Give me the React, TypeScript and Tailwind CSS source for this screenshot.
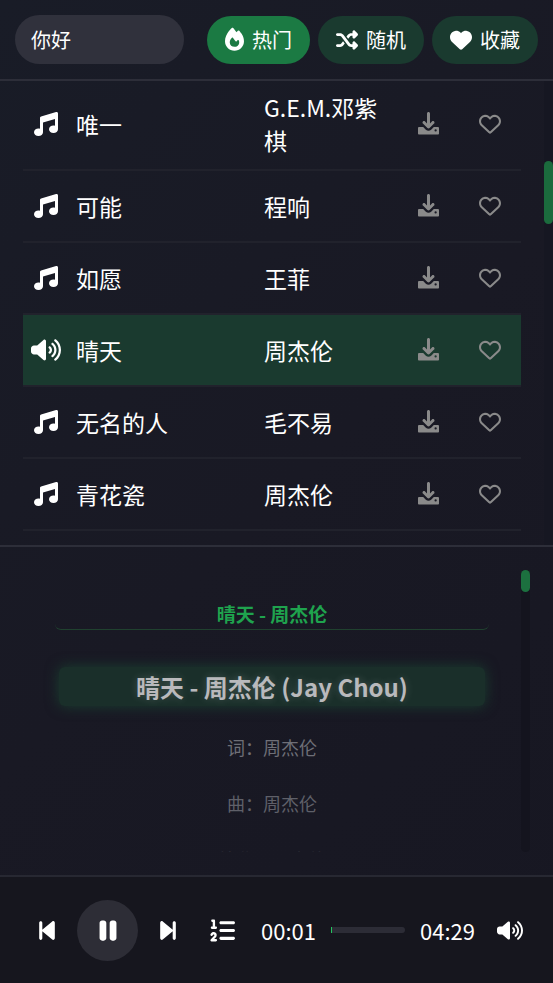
import { useState } from "react";
import {
  FaBackwardStep,
  FaForwardStep,
  FaHeart,
  FaListOl,
  FaMusic,
  FaPause,
  FaPlay,
  FaRegHeart,
  FaShuffle,
  FaVolumeHigh,
} from "react-icons/fa6";

function FireIcon() {
  return (
    <svg viewBox="0 0 448 512" fill="currentColor" className="h-[22px] w-[19px] overflow-visible" aria-hidden="true">
      <path d="M160.500-26.400c9.300-7.800 23-7.500 31.900 .900 12.300 11.600 23.300 24.400 33.900 37.400 13.500 16.500 29.700 38.300 45.300 64.200 5.200-6.800 10-12.800 14.200-17.900 1.100-1.300 2.200-2.700 3.300-4.100 7.900-9.800 17.700-22.100 30.800-22.100 13.400 0 22.800 11.900 30.800 22.100 1.300 1.700 2.600 3.300 3.900 4.800 10.300 12.400 24 30.300 37.700 52.400 27.200 43.900 55.600 106.400 55.600 176.600 0 123.700-100.300 224-224 224s-224-100.300-224-224c0-91.100 41.100-170 80.500-225 19.900-27.700 39.700-49.900 54.600-65.100 8.200-8.400 16.500-16.700 25.500-24.200zM225.700 416c25.300 0 47.700-7 68.800-21 42.100-29.400 53.400-88.200 28.100-134.400-4.500-9-16-9.600-22.500-2l-25.200 29.300c-6.600 7.600-18.500 7.400-24.700-.500-17.300-22.100-49.100-62.400-65.300-83-5.400-6.900-15.200-8-21.500-1.900-18.300 17.800-51.500 56.800-51.500 104.300 0 68.600 50.600 109.200 113.700 109.200z" />
    </svg>
  );
}

function DownloadIcon() {
  return (
    <svg viewBox="0 0 448 512" fill="currentColor" className="h-6 w-[21px]" aria-hidden="true">
      <path d="M256 32c0-17.700-14.300-32-32-32s-32 14.300-32 32v210.700l-41.400-41.400c-12.500-12.500-32.800-12.500-45.300 0s-12.500 32.800 0 45.300l96 96c12.500 12.500 32.800 12.500 45.300 0l96-96c12.500-12.500 12.500-32.800 0-45.300s-32.800-12.500-45.300 0L256 242.700V32z" />
      <path
        fillRule="evenodd"
        d="M24 320c-13.300 0-24 10.700-24 24v112c0 13.300 10.700 24 24 24h400c13.300 0 24-10.700 24-24V344c0-13.300-10.700-24-24-24h-86.900l-56.600 56.600c-31.200 31.200-81.900 31.200-113.100 0L110.900 320H24zm352 48a24 24 0 1 1 0 48 24 24 0 1 1 0-48z"
      />
    </svg>
  );
}

const songs = [
  { id: 1, name: "唯一", artist: "G.E.M.邓紫棋" },
  { id: 2, name: "可能", artist: "程响" },
  { id: 3, name: "如愿", artist: "王菲" },
  { id: 4, name: "晴天", artist: "周杰伦" },
  { id: 5, name: "无名的人", artist: "毛不易" },
  { id: 6, name: "青花瓷", artist: "周杰伦" },
];

const tabs = [
  { id: "hot", label: "热门", icon: <FireIcon /> },
  { id: "random", label: "随机", icon: <FaShuffle className="size-[22px]" /> },
  { id: "fav", label: "收藏", icon: <FaHeart className="size-[22px]" /> },
];

const lyrics = [
  { text: "词：周杰伦", tone: "text-[#6e6f77]" },
  { text: "曲：周杰伦", tone: "text-[#5f6069]" },
  { text: "编曲：周杰伦", tone: "text-[#2c2d36]" },
];

export default function App() {
  const [keyword, setKeyword] = useState("你好");
  const [tab, setTab] = useState("hot");
  const [current, setCurrent] = useState(4);
  const [playing, setPlaying] = useState(true);
  const [liked, setLiked] = useState<number[]>([]);
  const progress = 1 / 269;

  const toggleLike = (id: number) =>
    setLiked((prev) => (prev.includes(id) ? prev.filter((x) => x !== id) : [...prev, id]));

  return (
    <div className="flex h-screen flex-col overflow-hidden bg-linear-135 from-[#191c27] via-[#191924] to-[#171722] font-['Noto_Sans_CJK_SC',sans-serif] text-white">
      {/* Search and tabs */}
      <header className="flex shrink-0 items-center justify-between gap-5 border-b-2 border-[#2d2e39] p-[15px]">
        <input
          type="text"
          aria-label="搜索"
          className="h-[49px] w-[169px] min-w-0 rounded-full bg-[#30313c] px-4 text-xl text-white outline-none"
          value={keyword}
          onChange={(e) => setKeyword(e.target.value)}
        />
        <nav className="flex shrink-0 gap-2">
          {tabs.map((t) => (
            <button
              key={t.id}
              type="button"
              onClick={() => setTab(t.id)}
              className={[
                "flex h-12 items-center gap-2 rounded-full px-[18px] text-xl",
                tab === t.id ? "bg-[#1b7a43]" : "bg-[#1a3a2f]",
              ].join(" ")}
            >
              {t.icon}
              {t.label}
            </button>
          ))}
        </nav>
      </header>

      {/* Song list */}
      <main className="flex min-h-0 flex-1">
        <div className="min-w-0 flex-1 overflow-hidden px-[23px]">
          <table className="-mt-0.5 w-full table-fixed text-left text-[23px] leading-[33px]">
            <colgroup>
              <col className="w-[45px]" />
              <col />
              <col className="w-[141px]" />
              <col className="w-[62px]" />
              <col className="w-[62px]" />
            </colgroup>
            <tbody>
              {songs.map((song) => (
                <tr
                  key={song.id}
                  onClick={() => setCurrent(song.id)}
                  className={[
                    "h-[72px] border-b-2 border-[#21222c]",
                    song.id === current ? "bg-[#1a3a2f]" : "",
                  ].join(" ")}
                >
                  <td className="py-3">
                    <div className="flex justify-center">
                      {song.id === current ? (
                        <FaVolumeHigh className="h-6 w-[30px] shrink-0" />
                      ) : (
                        <FaMusic className="size-6" />
                      )}
                    </div>
                  </td>
                  <td className="px-2 py-3">{song.name}</td>
                  <td className="px-2 py-3">{song.artist}</td>
                  <td className="text-[#8a8a8a]">
                    <button type="button" aria-label="下载" className="flex w-full justify-center">
                      <DownloadIcon />
                    </button>
                  </td>
                  <td className="text-[#8a8a8a]">
                    <button
                      type="button"
                      aria-label="收藏"
                      onClick={() => toggleLike(song.id)}
                      className="flex w-full justify-center"
                    >
                      {liked.includes(song.id) ? (
                        <FaHeart className="size-[22px]" />
                      ) : (
                        <FaRegHeart className="size-[22px]" />
                      )}
                    </button>
                  </td>
                </tr>
              ))}
            </tbody>
          </table>
        </div>
        <div className="w-[9px] shrink-0 bg-[#161722] pt-20">
          <div className="h-[63px] rounded-full bg-[#1b6b3d]" />
        </div>
      </main>

      {/* Lyrics */}
      <section className="flex h-[330px] shrink-0 border-t-2 border-[#2d2e39] p-[23px]">
        <div className="min-w-0 flex-1 overflow-hidden text-center">
          <h2 className="mx-8 mt-7 rounded-b-md border-b border-[#20412f] text-[19px] leading-[31px] font-bold text-[#1fa34e]">
            晴天 - 周杰伦
          </h2>
          <p className="mx-9 mt-[37px] rounded-md bg-[#1a2f2a] text-2xl leading-[39px] font-bold text-[#b9b9bc] shadow-[0_0_14px_#1a3f30] text-shadow-[0_0_8px_#ffffff33]">
            晴天 - 周杰伦 (Jay Chou)
          </p>
          <div className="mt-[13px] text-lg leading-14">
            {lyrics.map((line) => (
              <p key={line.text} className={line.tone}>
                {line.text}
              </p>
            ))}
          </div>
        </div>
        <div className="w-[9px] shrink-0 rounded-full bg-[#14141e]">
          <div className="h-[22px] rounded-full bg-[#1c703f]" />
        </div>
      </section>

      {/* Player */}
      <footer className="flex h-[108px] shrink-0 items-center gap-[15px] border-t-2 border-[#272832] bg-[#16161e] pr-[23px] pl-8 text-[22px]">
        <button type="button" aria-label="上一首" className="flex w-[30px] justify-center">
          <FaBackwardStep className="h-[25px] w-4" />
        </button>
        <button
          type="button"
          aria-label={playing ? "暂停" : "播放"}
          onClick={() => setPlaying(!playing)}
          className="grid size-[61px] shrink-0 place-items-center rounded-full bg-[#2d2d36]"
        >
          {playing ? <FaPause className="h-[27px] w-5" /> : <FaPlay className="h-[27px] w-5" />}
        </button>
        <button type="button" aria-label="下一首" className="flex w-[30px] justify-center">
          <FaForwardStep className="h-[25px] w-4" />
        </button>
        <button type="button" aria-label="顺序播放" className="flex w-12 justify-center">
          <FaListOl className="size-[25px]" />
        </button>
        <span>00:01</span>
        <div className="h-1.5 min-w-0 flex-1 rounded-r-full bg-[#2c2c36]">
          <div className="h-full min-w-px bg-[#22c55e]" style={{ width: `${progress * 100}%` }} />
        </div>
        <span>04:29</span>
        <button type="button" aria-label="音量" className="flex w-10 justify-center">
          <FaVolumeHigh className="h-[21px] w-[26px]" />
        </button>
      </footer>
    </div>
  );
}
